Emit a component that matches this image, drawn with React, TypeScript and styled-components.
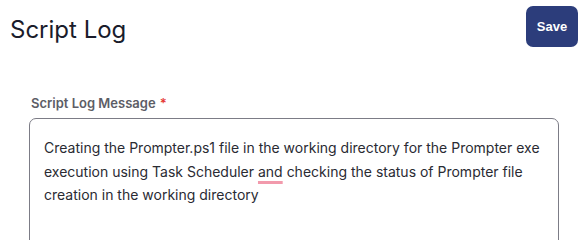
import * as React from 'react';
import styled, { createGlobalStyle } from 'styled-components';

const GlobalStyle = createGlobalStyle`
  html, body {
    margin: 0;
    padding: 0;
    background: #ffffff;
    font-family: Inter, "Noto Sans", sans-serif;
  }
`;

const Page = styled.div`
  width: 583px;
  height: 240px;
  overflow: hidden;
  box-sizing: border-box;
`;

const Header = styled.div`
  display: flex;
  justify-content: space-between;
  align-items: flex-start;
  padding: 6px 5px 0 10px;
`;

const Title = styled.h1`
  margin: 9px 0 0;
  font-size: 24px;
  font-weight: 400;
  line-height: 30px;
  color: #1a1c2b;
`;

const SaveButton = styled.button`
  width: 52px;
  height: 41px;
  border: none;
  border-radius: 7px;
  background: #2c3d7b;
  color: #ffffff;
  font-family: "Liberation Sans", Arial, sans-serif;
  font-size: 13px;
  font-weight: 700;
  cursor: pointer;
`;

const Field = styled.div`
  display: flex;
  flex-direction: column;
  gap: 7px;
  padding: 48px 24px 0 29px;
`;

const Label = styled.label`
  padding-left: 2px;
  font-size: 13px;
  font-weight: 600;
  line-height: 16px;
  color: #5c5d66;
`;

const Required = styled.span`
  margin-left: 4px;
  color: #e53935;
`;

const TextBox = styled.div`
  min-height: 140px;
  box-sizing: border-box;
  padding: 17px 14px 13px;
  border: 1px solid #7c7c86;
  border-radius: 7px;
  font-size: 14px;
  line-height: 23.5px;
  color: #2a2b33;
`;

const Misspelled = styled.span`
  text-decoration: underline;
  text-decoration-color: #f29aac;
  text-decoration-thickness: 2.5px;
  text-underline-offset: 4px;
`;

export default function App() {
  return (
    <Page>
      <GlobalStyle />
      <Header>
        <Title>Script Log</Title>
        <SaveButton>Save</SaveButton>
      </Header>
      <Field>
        <Label>
          Script Log Message<Required>*</Required>
        </Label>
        <TextBox>
          Creating the Prompter.ps1 file in the working directory for the Prompter exe execution
          using Task Scheduler <Misspelled>and</Misspelled> checking the status of Prompter file
          creation in the working directory
        </TextBox>
      </Field>
    </Page>
  );
}
